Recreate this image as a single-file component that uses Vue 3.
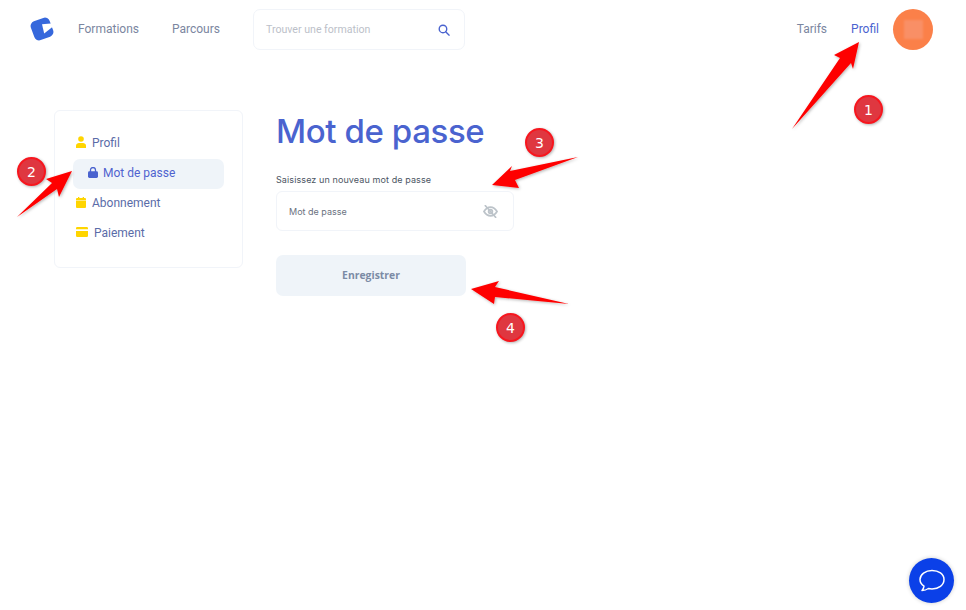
<template>
  <div class="page">
    <header class="topbar">
      <svg class="logo" viewBox="0 0 24 24" width="24" height="24">
        <rect x="2" y="2" width="20" height="20" rx="5" transform="rotate(-20 12 12)" fill="#3668dc" />
        <path d="M12 7.200L23.500 6.200 23 9.500 14.200 16.500z" fill="#fff" />
      </svg>
      <a class="nav-link link-first">Formations</a>
      <a class="nav-link link-second">Parcours</a>
      <div class="search">
        <span class="search-text">Trouver une formation</span>
        <svg viewBox="0 0 14 14" width="12" height="12" fill="none" stroke="#4a63cf" stroke-width="1.600">
          <circle cx="5.800" cy="5.800" r="4.400" />
          <path d="M9 9l4 4" stroke-linecap="round" />
        </svg>
      </div>
      <div class="spacer"></div>
      <a class="nav-link">Tarifs</a>
      <a class="nav-link active link-profil">Profil</a>
      <div class="avatar"><div class="avatar-blur"></div></div>
    </header>

    <div class="content">
      <aside class="sidebar">
        <div v-for="item in menu" :key="item.label" class="side-item" :class="{ current: item.current }">
          <svg v-if="item.icon === 'user'" viewBox="0 0 10 12" width="10" height="12" fill="#ffd500">
            <circle cx="5" cy="3" r="2.800" />
            <path d="M0 12V9.600C0 8 1.600 7 3 7h4c1.400 0 3 1 3 2.600V12z" />
          </svg>
          <svg v-else-if="item.icon === 'lock'" viewBox="0 0 10 11" width="10" height="11">
            <path d="M2.500 5V3a2.500 2.500 0 0 1 5 0V5" fill="none" stroke="#4a63cf" stroke-width="1.300" />
            <rect y="4.200" width="10" height="6.800" rx="1.400" fill="#4a63cf" />
          </svg>
          <svg v-else-if="item.icon === 'calendar'" viewBox="0 0 10 11" width="10" height="11" fill="#ffd500">
            <rect x="2" width="1.300" height="2" />
            <rect x="6.700" width="1.300" height="2" />
            <path d="M1 1h8a1 1 0 0 1 1 1v1.400H0V2a1 1 0 0 1 1-1z" />
            <path d="M0 4h10v6a1 1 0 0 1-1 1H1a1 1 0 0 1-1-1z" />
          </svg>
          <svg v-else viewBox="0 0 12 10" width="12" height="10" fill="#ffd500">
            <path d="M1.200 0h9.600A1.200 1.200 0 0 1 12 1.200V2.200H0V1.200A1.200 1.200 0 0 1 1.200 0z" />
            <path d="M0 4h12v4.800A1.200 1.200 0 0 1 10.800 10H1.200A1.200 1.200 0 0 1 0 8.800z" />
          </svg>
          <span>{{ item.label }}</span>
        </div>
      </aside>

      <main class="main">
        <h1 class="title">Mot de passe</h1>
        <label class="field-label">Saisissez un nouveau mot de passe</label>
        <div class="field">
          <span>Mot de passe</span>
          <svg viewBox="0 0 16 14" width="15" height="13" fill="none" stroke="#bcc3c9" stroke-width="1.900">
            <path d="M1 7c1.800-3 4.200-4.600 7-4.600s5.200 1.600 7 4.600c-1.800 3-4.200 4.600-7 4.600S2.800 10 1 7z" />
            <circle cx="8" cy="7" r="2" />
            <path d="M2.500 .8l11 12.400" stroke-linecap="round" />
          </svg>
        </div>
        <button class="save">Enregistrer</button>
      </main>
    </div>

    <svg class="arrows" viewBox="0 0 966 610" width="966" height="610">
      <defs>
        <filter id="arrow-shadow" x="-20%" y="-20%" width="140%" height="140%">
          <feDropShadow dx="1" dy="1" stdDeviation="1.500" flood-color="#000" flood-opacity="0.3" />
        </filter>
      </defs>
      <polygon v-for="(a, i) in arrows" :key="i" :points="a" fill="#fe0000" filter="url(#arrow-shadow)" />
    </svg>

    <div v-for="b in badges" :key="b.n" class="badge" :style="{ left: b.x - 14 + 'px', top: b.y - 14 + 'px' }">{{ b.n }}</div>

    <div class="chat">
      <svg viewBox="0 0 28 26" width="28" height="26" fill="none" stroke="#fff" stroke-width="1.500" stroke-linejoin="round">
        <path d="M14 2.500C7.400 2.500 2 6.500 2 11.500c0 2.800 1.500 5 4 6.700-.2 1.700-1 3.300-2 4.300 2.400 0 4.800-.8 6.400-2 1.200.3 2.300.4 3.600.4 6.600 0 12-3.800 12-9.400S20.600 2.500 14 2.500z" />
      </svg>
    </div>
  </div>
</template>

<script setup>
const menu = [
  { label: 'Profil', icon: 'user' },
  { label: 'Mot de passe', icon: 'lock', current: true },
  { label: 'Abonnement', icon: 'calendar' },
  { label: 'Paiement', icon: 'card' }
];

// annotation arrows drawn over the screenshot
const arrows = [
  '859,42 834,55 840,58 792,129 851,63 853,69',
  '72,171 46,179 52,183 17,217 57,189 59,197',
  '492,185 512,166 510,171 578,157 515,180 519,188',
  '471,289 499,281 495,287 569,304 495,297 494,304'
];

const badges = [
  { n: 1, x: 868, y: 109 },
  { n: 2, x: 31, y: 171 },
  { n: 3, x: 539, y: 142 },
  { n: 4, x: 510, y: 327 }
];
</script>

<style>
html, body {
  margin: 0;
  padding: 0;
  background: #fff;
}
</style>

<style scoped>
.page {
  position: relative;
  width: 966px;
  height: 610px;
  overflow: hidden;
  font-family: Roboto, sans-serif;
}

.topbar {
  display: flex;
  align-items: center;
  height: 41px;
  padding: 9px 33px 0 30px;
}

.logo {
  margin-right: 24px;
  margin-bottom: 2px;
}

.nav-link {
  margin-bottom: 2px;
  font-size: 12px;
  color: #7b86a0;
}

.link-first {
  margin-right: 33px;
}

.link-second {
  margin-right: 33px;
}

.nav-link.active {
  color: #4a63cf;
}

.link-profil {
  margin: 0 14px 2px 24px;
}

.search {
  box-sizing: border-box;
  display: flex;
  align-items: center;
  justify-content: space-between;
  width: 212px;
  height: 41px;
  padding: 0 14px 0 12px;
  border: 1px solid #f1f4f9;
  border-radius: 7px;
}

.search-text {
  font-size: 10.600px;
  color: #bcbfc9;
}

.spacer {
  flex: 1;
}

.avatar {
  display: flex;
  align-items: center;
  justify-content: center;
  width: 40px;
  height: 41px;
  border-radius: 50%;
  background: #fb8049;
}

.avatar-blur {
  width: 19px;
  height: 19px;
  background: #f98f66;
  filter: blur(1px);
}

.content {
  display: flex;
  padding: 60px 0 0 54px;
}

.sidebar {
  box-sizing: border-box;
  width: 189px;
  height: 158px;
  padding: 18px 18px 0 18px;
  border: 1px solid #f1f4f9;
  border-radius: 6px;
}

.side-item {
  display: flex;
  align-items: center;
  gap: 6px;
  height: 30px;
  padding-left: 3px;
  font-size: 12px;
  line-height: 24px;
  color: #5a6ca8;
}

.side-item svg {
  margin-bottom: 4px;
}

.side-item span {
  margin-bottom: 3px;
}

.side-item.current {
  padding-left: 15px;
  gap: 5px;
  border-radius: 7px;
  background: #eff4f9;
  color: #4f63cf;
}

.main {
  display: flex;
  flex-direction: column;
  align-items: flex-start;
  margin-left: 33px;
}

.title {
  margin: 0;
  font-family: Inter, sans-serif;
  font-size: 33px;
  font-weight: 450;
  line-height: 42px;
  letter-spacing: -0.400px;
  color: #4a63cf;
}

.field-label {
  margin-top: 22px;
  font-family: Inter, sans-serif;
  font-size: 9px;
  line-height: 12px;
  letter-spacing: 0.100px;
  color: #4b5563;
}

.field {
  box-sizing: border-box;
  display: flex;
  align-items: center;
  justify-content: space-between;
  width: 238px;
  height: 40px;
  margin-top: 5px;
  padding: 0 15px 0 12px;
  border: 1px solid #f1f4f9;
  border-radius: 6px;
  font-family: Inter, sans-serif;
  font-size: 9px;
  color: #6b7280;
}

.save {
  width: 190px;
  height: 41px;
  margin-top: 24px;
  padding-bottom: 2px;
  border: 0;
  border-radius: 7px;
  background: #eff4f9;
  font-family: "Open Sans", sans-serif;
  font-size: 10.400px;
  font-weight: 700;
  color: #7b8ba5;
}

.arrows {
  position: absolute;
  left: 0;
  top: 0;
  pointer-events: none;
}

.badge {
  position: absolute;
  box-sizing: border-box;
  display: flex;
  align-items: center;
  justify-content: center;
  width: 29px;
  height: 29px;
  border: 2px solid #f7161e;
  border-radius: 50%;
  background: #df3740;
  box-shadow: 1px 1px 3px rgba(0, 0, 0, 0.3);
  font-family: "DejaVu Sans", sans-serif;
  font-size: 14px;
  color: #fff;
}

.chat {
  position: absolute;
  left: 909px;
  top: 558px;
  display: flex;
  align-items: center;
  justify-content: center;
  width: 45px;
  height: 45px;
  border-radius: 50%;
  background: #0b40e8;
  box-shadow: 0 0 4px rgba(0, 0, 0, 0.2);
}
</style>
